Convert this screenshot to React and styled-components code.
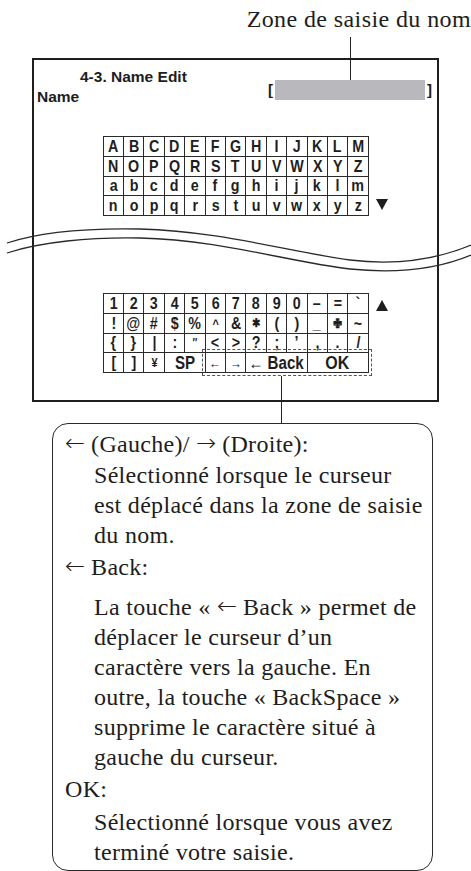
import React from 'react';
import styled, { createGlobalStyle } from 'styled-components';

const GlobalStyle = createGlobalStyle`
  html, body {
    margin: 0;
    padding: 0;
    background: #fff;
  }
`;

const Page = styled.div`
  position: relative;
  width: 471px;
  height: 871px;
  overflow: hidden;
  background: #fff;
  color: #1d1d1d;
`;

const Caption = styled.div`
  padding: 4px 0 0 0;
  height: 30px;
  text-align: right;
  white-space: nowrap;
  font-family: "Liberation Serif", "Times New Roman", serif;
  font-size: 24px;
  letter-spacing: 0.4px;
  line-height: 30px;
`;

const Leader = styled.div`
  position: absolute;
  left: ${p => p.x}px;
  top: ${p => p.y}px;
  width: 1.3px;
  height: ${p => p.h}px;
  background: #222;
`;

const Screen = styled.div`
  box-sizing: border-box;
  margin: 24px 0 0 32px;
  width: 407px;
  height: 344px;
  border: 2px solid #1e1e1e;
  font-family: "Liberation Sans", Arial, sans-serif;
  font-weight: bold;
`;

const Header = styled.div`
  display: flex;
  justify-content: space-between;
  align-items: flex-start;
  padding: 7px 5px 0 3px;
`;

const TitleBlock = styled.div`
  font-size: 15.5px;
  line-height: 20px;
`;

const Title = styled.div`
  padding-left: 43px;
`;

const NameField = styled.div`
  display: flex;
  align-items: center;
  gap: 2px;
  margin-top: 13px;
  font-size: 15px;
  line-height: 20px;
`;

const Bar = styled.div`
  width: 150px;
  height: 20px;
  background: #b9b9bd;
`;

const KeyRow = styled.div`
  display: flex;
  align-items: ${p => (p.up ? 'flex-start' : 'flex-end')};
  gap: 7px;
  margin: ${p => p.top}px 0 0 68.7px;
`;

const GridWrap = styled.div`
  position: relative;
`;

const Grid = styled.div`
  display: grid;
  grid-template-columns: repeat(13, 1fr);
  grid-auto-rows: 18.75px;
  gap: 1px;
  width: 266px;
  box-sizing: border-box;
  border: 1px solid #2a2a2a;
  background: #2a2a2a;
`;

const Key = styled.div`
  grid-column: span ${p => p.span || 1};
  display: flex;
  align-items: center;
  justify-content: center;
  background: #fff;
  font-size: ${p => p.size || 17}px;
  line-height: 1;
  color: #1e1e1e;
  white-space: nowrap;
  overflow: hidden;
`;

const Glyph = styled.span`
  display: inline-block;
  transform: scaleX(0.84);
`;

const Dashed = styled.div`
  position: absolute;
  left: 99px;
  top: 56px;
  width: 170px;
  height: 27px;
  box-sizing: border-box;
  border: 1.5px dashed #555;
`;

const Tri = styled.div`
  width: 0;
  height: 0;
  border-left: 6.5px solid transparent;
  border-right: 6.5px solid transparent;
  ${p => (p.up
    ? 'border-bottom: 11px solid #1e1e1e; margin-top: 7px;'
    : 'border-top: 11px solid #1e1e1e; margin-bottom: 6px;')}
`;

const Waves = styled.svg`
  position: absolute;
  left: 0;
  top: 0;
  pointer-events: none;
`;

const Callout = styled.div`
  box-sizing: border-box;
  margin: 21px 0 0 52px;
  width: 381px;
  height: 448px;
  padding: 5px 0 0 12px;
  border: 1.3px solid #2a2a2a;
  border-radius: 16px;
  font-family: "Liberation Serif", "Times New Roman", serif;
  font-size: 24px;
  letter-spacing: 0.3px;
  line-height: 30px;
  white-space: nowrap;
`;

const Head = styled.div`
  margin-top: ${p => p.top || 0}px;
`;

const Body = styled.div`
  padding-left: 29px;
  margin-top: ${p => p.top || 0}px;
`;

const Arr = styled.span`
  display: inline-block;
  font-family: "DejaVu Sans", sans-serif;
  font-weight: 200;
  font-size: 24px;
  margin-right: 6px;
  vertical-align: 1px;
  line-height: 1;
  letter-spacing: 0;
`;

const upper = [
  'A B C D E F G H I J K L M',
  'N O P Q R S T U V W X Y Z',
  'a b c d e f g h i j k l m',
  'n o p q r s t u v w x y z',
].map(r => r.split(' '));

const lower = [
  ['1', '2', '3', '4', '5', '6', '7', '8', '9', '0', '–', '=', '`'],
  ['!', '@', '#', '$', '%', '^', '&', '✱', '(', ')', '_', '✙', '~'],
  ['{', '}', '|', ':', '″', '<', '>', '?', ';', '’', ',', '.', '/'],
];

const small = { '✱': 12, '✙': 13, '″': 12, '^': 13 };

export default function App() {
  return (
    <Page>
      <GlobalStyle />
      <Caption>Zone de saisie du nom</Caption>
      <Leader x={350} y={37} h={43} />
      <Leader x={281} y={376} h={47} />

      <Screen>
        <Header>
          <TitleBlock>
            <Title>4-3. Name Edit</Title>
            <div>Name</div>
          </TitleBlock>
          <NameField>
            <span>[</span>
            <Bar />
            <span>]</span>
          </NameField>
        </Header>

        <KeyRow top={29}>
          <Grid>
            {upper.flat().map((c, i) => <Key key={i}><Glyph>{c}</Glyph></Key>)}
          </Grid>
          <Tri />
        </KeyRow>

        <KeyRow top={77} up>
          <GridWrap>
            <Grid>
              {lower.flat().map((c, i) => (
                <Key key={i} size={small[c]}><Glyph>{c}</Glyph></Key>
              ))}
              <Key><Glyph>[</Glyph></Key>
              <Key><Glyph>]</Glyph></Key>
              <Key size={13}><Glyph>¥</Glyph></Key>
              <Key span={2} size={18}><Glyph>SP</Glyph></Key>
              <Key size={14}><Glyph>←</Glyph></Key>
              <Key size={14}><Glyph>→</Glyph></Key>
              <Key span={3} size={18}><Glyph>← Back</Glyph></Key>
              <Key span={3} size={19}><Glyph>OK</Glyph></Key>
            </Grid>
            <Dashed />
          </GridWrap>
          <Tri up />
        </KeyRow>
      </Screen>

      <Waves width="471" height="871" viewBox="0 0 471 871">
        <path d="M7,243 C40,232 90,228 140,229 C220,231 290,252 350,260 C400,266 440,258 471,245" fill="none" stroke="#2a2a2a" strokeWidth="1.3" />
        <path d="M7,253 C40,242 90,237 140,238 C220,240 290,262 350,269 C400,274 440,268 471,255" fill="none" stroke="#2a2a2a" strokeWidth="1.3" />
      </Waves>

      <Callout>
        <Head><Arr>←</Arr>(Gauche)/ <Arr>→</Arr>(Droite):</Head>
        <Body top={1}>
          Sélectionné lorsque le curseur<br />
          est déplacé dans la zone de saisie<br />
          du nom.
        </Body>
        <Head top={2}><Arr>←</Arr>Back:</Head>
        <Body top={10}>
          La touche « <Arr>←</Arr>Back » permet de<br />
          déplacer le curseur d’un<br />
          caractère vers la gauche. En<br />
          outre, la touche « BackSpace »<br />
          supprime le caractère situé à<br />
          gauche du curseur.
        </Body>
        <Head top={2}>OK:</Head>
        <Body top={3}>
          Sélectionné lorsque vous avez<br />
          terminé votre saisie.
        </Body>
      </Callout>
    </Page>
  );
}
